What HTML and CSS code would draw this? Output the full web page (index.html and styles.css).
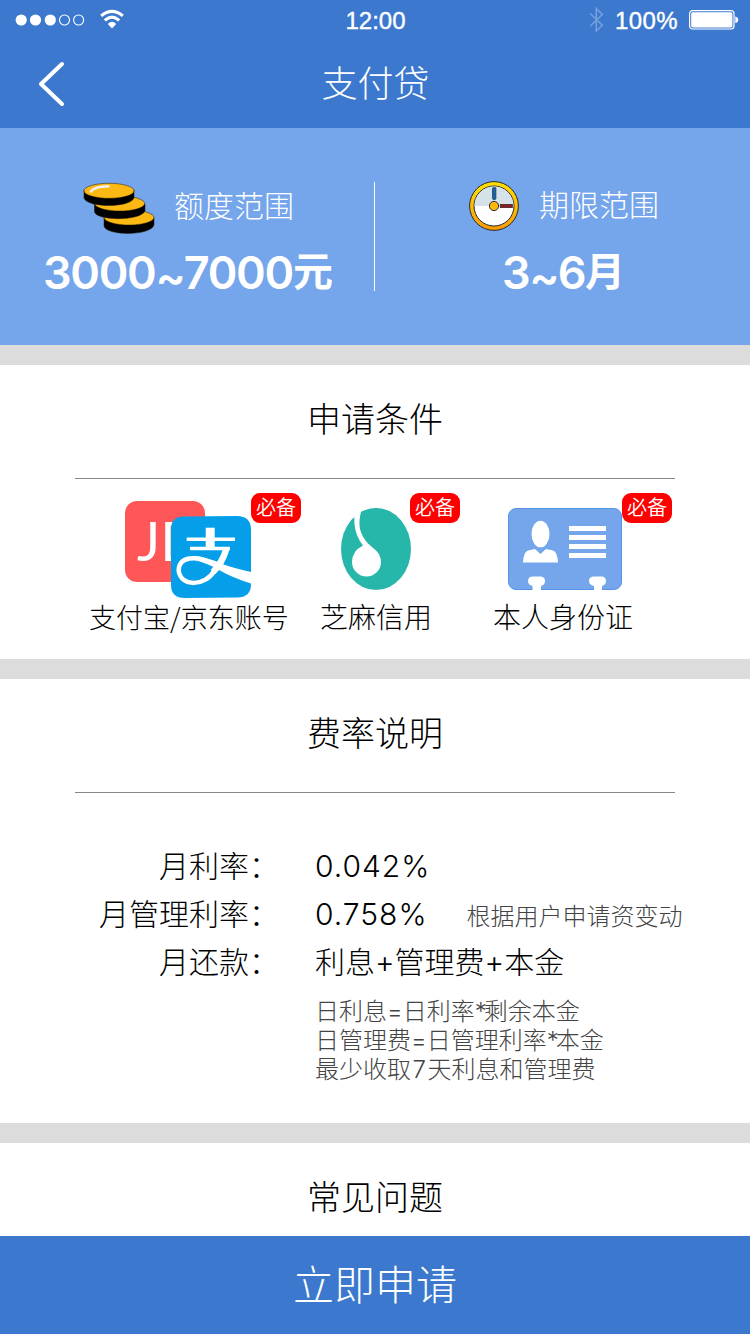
FILE: index.html
```html
<!DOCTYPE html>
<html lang="zh-CN">
<head>
<meta charset="utf-8">
<title>支付贷</title>
<link rel="stylesheet" href="styles.css">
</head>
<body>
<div class="app">
  <header class="header">
    <div class="status">
      <div class="status-left">
        <svg class="signal" width="70" height="12" viewBox="0 0 70 12"><g fill="#fff"><circle cx="6.2" cy="6" r="5.6"/><circle cx="20.5" cy="6" r="5.6"/><circle cx="35.3" cy="6" r="5.6"/></g><g fill="none" stroke="#fff" stroke-width="1.1"><circle cx="49.5" cy="6" r="5"/><circle cx="63.6" cy="6" r="5"/></g></svg>
        <svg class="wifi" width="24" height="20" viewBox="0 0 24 20"><g fill="none" stroke="#fff" stroke-width="3.2"><path d="M1.2 6.9Q12 -2.3 22.8 6.9"/><path d="M4.8 11.4Q12 5 19.2 11.4"/></g><path fill="#fff" d="M7.8 14.9Q12 10.8 16.2 14.9L12 19.4Z"/></svg>
      </div>
      <div class="time">12:00</div>
      <div class="status-right">
        <svg class="bluetooth" width="16" height="28" viewBox="0 0 16 28"><path fill="none" stroke="#75a0dd" stroke-width="1.6" d="M1.2 7.5L13.3 19.3L7.3 25V2.5L13.3 8.5L1.2 20"/></svg>
        <span class="percent">100%</span>
        <svg class="battery" width="50" height="20" viewBox="0 0 50 20"><rect x=".6" y=".6" width="44.4" height="18.4" rx="3" fill="none" stroke="#fff" stroke-width="1.2"/><rect x="2.2" y="2.2" width="41.2" height="15.2" rx="1.6" fill="#fff"/><path fill="#fff" d="M46.3 6.3Q49.4 7.4 49.4 9.8Q49.4 12.2 46.3 13.3Z"/></svg>
      </div>
    </div>
    <nav class="nav">
      <svg class="back" width="28" height="46" viewBox="0 0 28 46"><path fill="none" stroke="#fff" stroke-width="4" stroke-linecap="round" stroke-linejoin="round" d="M24 3L3 23L24 43"/></svg>
      <h1 class="nav-title">支付贷</h1>
    </nav>
  </header>

  <section class="summary">
    <div class="summary-item amount">
      <div class="summary-head">
        <svg class="coins" width="72" height="52" viewBox="0 0 72 52">
          <g stroke="#231800" stroke-width=".5">
            <path fill="#000" d="M21 36V44C23 54 68 54 71 43V36Z"/><ellipse cx="46" cy="35.5" rx="25" ry="7.5" fill="#fdb913"/>
            <path fill="#000" d="M11.5 22V30C14 39 58 39 62 29V22Z"/><ellipse cx="36.7" cy="21.5" rx="25" ry="7.5" fill="#fdb913"/>
            <path fill="#000" d="M1 8V16C4 26 47 26 51 16V8Z"/><ellipse cx="26" cy="8.8" rx="25" ry="7.5" fill="#fdb913"/>
          </g>
          <path d="M7.5 10.5Q10 4.5 26.5 4.3" fill="none" stroke="#f2f0f5" stroke-width="2.6"/>
        </svg>
        <span class="summary-label">额度范围</span>
      </div>
      <div class="summary-value"><span class="digits">3000<span class="tilde">~</span>7000</span>元</div>
    </div>
    <div class="divider"></div>
    <div class="summary-item term">
      <div class="summary-head">
        <svg class="clock" width="50" height="50" viewBox="0 0 50 50">
          <defs><linearGradient id="rim" x1="0" y1="0" x2="0" y2="1"><stop offset="0" stop-color="#ffe100"/><stop offset="1" stop-color="#f99b00"/></linearGradient></defs>
          <circle cx="25" cy="25" r="24.4" fill="url(#rim)" stroke="#28283a"/>
          <circle cx="25" cy="25" r="20" fill="#fff" stroke="#28283a"/>
          <path d="M5.5 25A19.5 19.5 0 0 1 44.5 25Z" fill="#d5e2e8"/>
          <rect x="23.5" y="6.5" width="3.4" height="12" rx="1" fill="#1763a5" stroke="#25445c" stroke-width=".8"/>
          <rect x="31.3" y="23.4" width="12" height="3.2" fill="#861f24" stroke="#4b2027" stroke-width=".8"/>
          <circle cx="25" cy="25" r="4.6" fill="#ffb908" stroke="#28283a"/>
        </svg>
        <span class="summary-label">期限范围</span>
      </div>
      <div class="summary-value"><span class="digits">3<span class="tilde">~</span>6</span>月</div>
    </div>
  </section>

  <section class="card conditions">
    <h2 class="card-title">申请条件</h2>
    <div class="condition-list">
      <div class="condition account">
        <div class="art">
          <svg class="pay-logos" width="126" height="97" viewBox="0 0 126 97">
            <rect width="80" height="81" rx="12" fill="#ff5757"/>
            <text class="jd" x="12" y="60">JD</text>
            <path fill="#059fe9" d="M58 15.5L112 15Q126 15 126 29V83Q126 96.5 112 96.5L60 97Q46 97 46 84V28Q46 16 58 15.5Z"/>
            <g fill="none" stroke="#fff">
              <path stroke-width="3.6" d="M61.7 38.3H110M65 47.5H105"/>
              <path stroke-width="9" d="M85.2 26.7V47"/>
              <path stroke-width="6.5" d="M101.5 47Q98 61 88 71"/>
              <path stroke-width="4.5" d="M90 69C80 86 56 86 53.7 70C53 55 72 54 88 63"/>
            </g>
            <path fill="#fff" d="M70 55Q82 56 96 62.5Q108 67 126 71V82.5Q108 77 94 69Q84 63 70 59Z"/>
          </svg>
          <span class="badge">必备</span>
        </div>
        <div class="condition-name">支付宝/京东账号</div>
      </div>
      <div class="condition credit">
        <div class="art">
          <svg class="sesame" width="70" height="82" viewBox="0 0 70 82">
            <ellipse cx="35" cy="41" rx="35" ry="41" fill="#27b7aa"/>
            <path fill="#fff" d="M13.5 16L13 5L20 4Q17.500 13 19 21Q21 29 27 35.500L35.500 43Q40 48 40 54A14.500 14.500 0 0 1 11 54Q11 43 22 37.500Q14.500 28 13.500 16Z"/>
          </svg>
          <span class="badge">必备</span>
        </div>
        <div class="condition-name">芝麻信用</div>
      </div>
      <div class="condition identity">
        <div class="art">
          <svg class="id-card" width="114" height="82" viewBox="0 0 114 82">
            <rect x=".5" y=".5" width="113" height="81" rx="7.5" fill="#75a5eb" stroke="#5794e7"/>
            <g fill="#fff">
              <ellipse cx="32.5" cy="26" rx="9" ry="13.3"/>
              <path d="M15 54.5Q15.500 44 20 42.500L27 41L32.500 46L38 41L45 42.500Q49.500 44 50 54.500Z"/>
              <path d="M61 18H98V23H61ZM61 27H98V32H61ZM61 36H98V41H61ZM61 45H98V50H61Z"/>
              <path d="M24.500 82V78Q20 77 20 73Q20 68.500 25 68.500H32Q37 68.500 37 73Q37 77 33 78V82ZM86 82V78Q81 77 81 73Q81 68.500 86 68.500H93Q98 68.500 98 73Q98 77 94 78V82Z"/>
            </g>
          </svg>
          <span class="badge">必备</span>
        </div>
        <div class="condition-name">本人身份证</div>
      </div>
    </div>
  </section>

  <section class="card rates">
    <h2 class="card-title">费率说明</h2>
    <dl class="rate-list">
      <dt>月利率：</dt><dd><span class="rate">0.042%</span></dd>
      <dt>月管理利率：</dt><dd><span class="rate">0.758%</span><span class="note">根据用户申请资变动</span></dd>
      <dt>月还款：</dt><dd>利息+管理费+本金</dd>
    </dl>
    <div class="formulas">
      <p>日利息=日利率<span class="star">*</span>剩余本金</p>
      <p>日管理费=日管理利率<span class="star">*</span>本金</p>
      <p>最少收取<span class="days">7</span>天利息和管理费</p>
    </div>
  </section>

  <section class="card faq">
    <h2 class="card-title">常见问题</h2>
  </section>

  <button class="apply">立即申请</button>
</div>
</body>
</html>
```
FILE: styles.css
```css
* { box-sizing: border-box; margin: 0; padding: 0; }
body { font-family: "Noto Sans CJK SC", sans-serif; font-weight: 300; color: #000; background: #fff; }
svg { display: block; flex: none; }
.app { width: 750px; height: 1334px; display: flex; flex-direction: column; background: #dcdcdc; overflow: hidden; white-space: nowrap; }

.header { height: 128px; background: #3b78ce; color: #fff; flex: none; }
.status { height: 40px; display: grid; grid-template-columns: 1fr auto 1fr; align-items: center; font-family: "Liberation Sans", Arial, sans-serif; font-size: 24px; -webkit-text-stroke: .4px #fff; }
.status-left { display: flex; align-items: center; padding-left: 15px; gap: 15px; }
.signal { margin-bottom: 1px; }
.wifi { margin-bottom: 3px; }
.time { line-height: 40px; padding: 1px 0 0 1px; }
.status-right { display: flex; align-items: center; justify-content: flex-end; padding-right: 11px; }
.bluetooth { margin-bottom: 1px; }
.battery { margin-bottom: 1px; }
.percent { margin: 1px 11px 0 10px; letter-spacing: .4px; }
.nav { height: 88px; display: grid; grid-template-columns: 64px 1fr 64px; align-items: center; }
.back { margin-left: 38px; }
.nav-title { font-size: 36px; font-weight: 300; text-align: center; line-height: 80px; padding: 0 0 6px 1px; }

.summary { height: 217px; flex: none; display: flex; background: #75a5eb; color: #fff; }
.divider { width: 1px; height: 109px; margin-top: 54px; background: #fff; }
.summary-item { padding-top: 53px; }
.amount { width: 374px; }
.summary-head { display: flex; height: 52px; align-items: center; font-size: 30px; font-weight: 300; }
.coins { margin-top: 1px; }
.amount .summary-head { padding-left: 83px; gap: 19px; }
.term .summary-head { padding-left: 94px; gap: 20px; padding-bottom: 3px; }
.summary-label { line-height: 48px; margin-top: -6px; }
.summary-value { font-size: 40px; font-weight: 700; line-height: 60px; margin-top: 6px; }
.digits { font-family: Inter, sans-serif; font-size: 45px; font-weight: 600; line-height: 0; letter-spacing: -1.3px; vertical-align: -3px; }
.tilde { vertical-align: -4px; letter-spacing: -2px; }
.amount .summary-value { padding-left: 43px; }
.term .summary-value { padding-left: 127px; }

.card { background: #fff; flex: none; }
.card-title { width: 600px; margin: 0 auto; font-size: 34px; font-weight: 300; text-align: center; height: 114px; line-height: 105px; border-bottom: 1px solid #888; }
.conditions { height: 294px; margin-top: 20px; }
.condition-list { display: flex; padding: 14px 0 0 89px; }
.art { display: flex; height: 105px; }
.badge { flex: none; width: 50px; height: 30px; border-radius: 9px; background: #f00; color: #fff; font-size: 20px; font-weight: 350; line-height: 28px; text-align: center; }
.account { width: 198px; margin-right: 33px; }
.credit { width: 112px; margin-right: 61px; }
.identity { width: 140px; }
.pay-logos { margin: 8px 0 0 36px; }
.jd { font-family: Lato, sans-serif; font-size: 55px; font-weight: 400; fill: #fff; }
.sesame { margin: 15px -1px 0 21px; }
.id-card { margin: 15px 0 0 15px; }
.condition-name { font-size: 28px; line-height: 37px; }
.account .condition-name { font-size: 27px; }

.rates { height: 444px; margin-top: 20px; }
.rate-list { display: grid; grid-template-columns: 279px 1fr; column-gap: 36px; padding-top: 47px; font-size: 30px; line-height: 48px; grid-auto-rows: 48px; }
.rate-list dt { text-align: right; }
.rate-list dd { font-family: Inter, "Noto Sans CJK SC", sans-serif; font-weight: 300; padding-top: 2px; }
.rate { letter-spacing: 1px; }
.note { font-size: 24px; color: #444; margin-left: 39px; }
.formulas { font-family: Inter, "Noto Sans CJK SC", sans-serif; font-size: 24px; line-height: 29px; color: #444; padding: 13px 0 0 315px; }
.star { letter-spacing: -3px; }
.days { margin: 0 1.5px; }

.faq { height: 93px; margin-top: 20px; }
.faq .card-title { border-bottom: 0; height: 93px; }
.apply { border: 0; height: 98px; background: #3b78ce; color: #fff; font: 300 41px/92px "Noto Sans CJK SC", sans-serif; padding-bottom: 6px; flex: none; }
```
